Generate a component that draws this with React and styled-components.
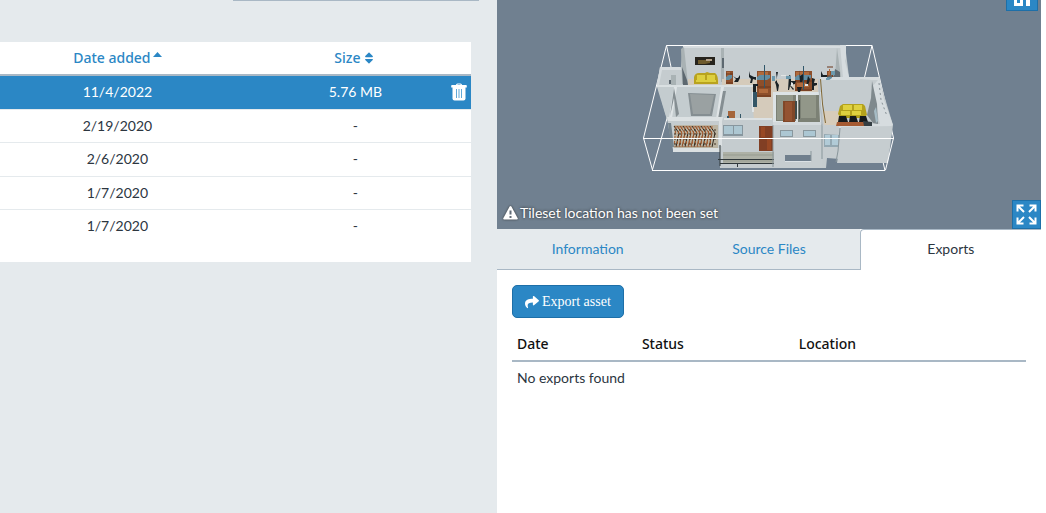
import React from "react";
import styled, { createGlobalStyle, css } from "styled-components";
import { FaShare, FaSort } from "react-icons/fa";

const blue = "#2b87c5";
const line = "#a9b8c5";
const pale = "#e5eaed";

const GlobalStyle = createGlobalStyle`
  *, *::before, *::after { box-sizing: border-box; }
  body {
    margin: 0;
    background: #fff;
    color: #2c363f;
    font: 14px/20px Lato, "Liberation Sans", sans-serif;
  }
`;

const Page = styled.div`
  display: grid;
  grid-template-columns: minmax(0, 497fr) minmax(0, 544fr);
  min-height: 100vh;
  padding-right: 5px;
`;

const AssetsPane = styled.main`
  padding-right: 26px;
  background: ${pale};
`;

const Toolbar = styled.div`
  width: 246px;
  height: 1px;
  margin: 0 -8px 41px auto;
  background: ${line};
`;

const AssetCard = styled.section`
  padding-bottom: 18px;
  background: #fff;
`;

const AssetTable = styled.table`
  width: 100%;
  border-collapse: separate;
  border-spacing: 0;
  table-layout: fixed;
  text-align: center;

  th, td { padding: 0; }
  th { height: 34px; border-bottom: 2px solid ${line}; }
  th:first-child, td:first-child { padding-right: 29px; }
`;

const DateColumn = styled.col`
  width: 56%;
`;

const ActionColumn = styled.col`
  width: 24px;
`;

const SortButton = styled.button`
  display: inline-flex;
  align-items: center;
  gap: 2px;
  padding: 0;
  border: 0;
  background: none;
  color: ${blue};
  font: 500 14px/20px "Noto Sans", "Open Sans", sans-serif;
`;

const AssetRow = styled.tr`
  td {
    height: 33px;
    border-bottom: 1px solid ${pale};
  }
  &:nth-child(odd) td { height: 34px; padding-bottom: 2px; }
  &:last-child td { border-bottom: 0; }
  ${({ $selected }) => $selected && css`
    td { background: ${blue}; color: #fff; }
  `}
`;

const TrashButton = styled.button`
  display: block;
  width: 24px;
  padding: 0 4px;
  border: 0;
  background: none;
  color: #fff;
  svg { display: block; }
`;

const DetailPane = styled.aside`
  background: #fff;
`;

const Viewer = styled.section`
  position: relative;
  height: 229px;
  padding-top: 40px;
  overflow: hidden;
  background: #708090;
`;

const Model = styled.svg`
  display: block;
  width: 260px;
  height: 136px;
  margin: 0 auto;
`;

const ViewerButton = styled.button`
  position: absolute;
  display: flex;
  align-items: center;
  justify-content: center;
  padding: 0;
  border: 1px solid #1d6fa8;
  background: ${blue};
  color: #fff;
`;

const SceneButton = styled(ViewerButton)`
  top: -21px;
  right: 3px;
  width: 32px;
  height: 32px;
`;

const FullscreenButton = styled(ViewerButton)`
  right: 0;
  bottom: 0;
  width: 29px;
  height: 29px;
`;

const Notice = styled.p`
  position: absolute;
  left: 6px;
  bottom: 6px;
  display: flex;
  align-items: center;
  gap: 2px;
  margin: 0;
  color: #fff;
  text-shadow: 0 0 3px #222;
  svg { filter: drop-shadow(0 0 1px #333); }
`;

const Tabs = styled.div`
  display: grid;
  grid-template-columns: repeat(3, 1fr);
  height: 41px;
`;

const Tab = styled.button`
  padding: 0;
  border: 0;
  border-bottom: 1px solid ${line};
  background: ${pale};
  color: ${blue};
  font: inherit;
  ${({ $active }) => $active && css`
    padding-bottom: 2px;
    border: solid ${line};
    border-width: 1px 0 0 1px;
    border-radius: 4px 0 0 0;
    background: #fff;
    color: #2c363f;
  `}
`;

const TabPanel = styled.div`
  padding: 15px;
`;

const ExportButton = styled.button`
  display: flex;
  align-items: center;
  gap: 3px;
  height: 33px;
  padding: 0 12px;
  border: 1px solid #1d6fa8;
  border-radius: 5px;
  background: ${blue};
  color: #fff;
  font: 14px/20px "Liberation Serif", serif;
`;

const ExportTable = styled.table`
  width: 100%;
  margin-top: 8px;
  border-collapse: separate;
  border-spacing: 0;
  table-layout: fixed;
  text-align: left;

  th {
    height: 36px;
    padding: 2px 5px 0;
    border-bottom: 2px solid ${line};
    color: #111;
    font: 500 14px/20px "Noto Sans", "Open Sans", sans-serif;
  }
  td { height: 32px; padding: 0 5px; }
`;

const ExportColumn = styled.col`
  width: ${({ $share }) => $share};
`;

const assets = [
  { date: "11/4/2022", size: "5.76 MB", selected: true },
  { date: "2/19/2020", size: "-" },
  { date: "2/6/2020", size: "-" },
  { date: "1/7/2020", size: "-" },
  { date: "1/7/2020", size: "-" },
];

function CaretUp() {
  return (
    <svg width="9" height="12" viewBox="0 0 9 12" aria-hidden="true">
      <path d="M0 5 4.5 0 9 5z" fill="currentColor" />
    </svg>
  );
}

function Trash() {
  return (
    <svg width="16" height="18" viewBox="0 0 16 18" aria-hidden="true">
      <path d="M5 2Q5 .5 6.500 .5h3Q11 .5 11 2h4q.8 0 .8.700V4.500H.2V2.700Q.2 2 1 2zM6.500 1.500V2h3v-.5z" fill="currentColor" fillRule="evenodd" />
      <path d="M1.500 4h13v11.500q0 2-2 2h-9q-2 0-2-2z" fill="currentColor" />
      <path d="M5.500 6v9M8 6v9M10.500 6v9" stroke="#62a9d8" />
    </svg>
  );
}

function Warning() {
  return (
    <svg width="15" height="14" viewBox="0 0 15 14" aria-hidden="true">
      <path d="M6.600.6q.9-1.200 1.800 0l6.300 11.600q.5 1.300-1 1.300H1.300q-1.500 0-1-1.300z" fill="currentColor" />
      <path d="M6.500 4.500h2v4h-2zM6.500 10h2v2h-2z" fill="#626d78" />
    </svg>
  );
}

function Fullscreen() {
  return (
    <svg width="21" height="21" viewBox="0 0 21 21" fill="none" stroke="currentColor" strokeWidth="2" aria-hidden="true">
      <path d="M1.500 7.500v-6h6M2 2l6 6M13.500 1.500h6v6M19 2l-6 6M1.500 13.500v6h6M2 19l6-6M19.500 13.500v6h-6M19 19l-6-6" />
    </svg>
  );
}

function Scene() {
  return (
    <svg width="22" height="22" viewBox="0 0 22 22" aria-hidden="true">
      <path d="M3 13h9v9H3zm3 3v3h3v-3z" fill="currentColor" fillRule="evenodd" />
      <path d="M15 13h4v9h-4zM3 9 11 2l8 7v2H3z" fill="currentColor" />
    </svg>
  );
}

function Desk({ x, y, width, height }) {
  return (
    <g transform={`translate(${x} ${y})`}>
      <path fill="#8d4f2b" d={`M0 0h${width}v${height}H0z`} />
      <path fill="#b06a3c" d={`M1 1h${width - 4}v4H1zM2 ${height - 8}h${width - 5}v4H2z`} />
      <path fill="#628da1" d={`M0 6l3-2h${width - 4}v3l-3 2H0z`} />
      <path stroke="#6b361c" d={`M0 ${height - 10}h${width}M0 ${height - 1}h${width}`} />
    </g>
  );
}

const desks = [
  { x: 726, y: 71, width: 7, height: 13 },
  { x: 757, y: 71, width: 14, height: 26 },
  { x: 795, y: 71, width: 17, height: 20 },
  { x: 827, y: 71, width: 6, height: 6 },
];

function Building() {
  return (
    <Model viewBox="639 40 260 136" role="img" aria-label="Building model preview">
      <path d="M643.500 138 666.500 45.500H872L893.500 138M666.500 45.500l9 43-23 81M872 45.500l-8 34 21 91" fill="none" stroke="#fff" />
      <path fill="#c5cccf" d="M660 67h21l2-21 162-1 4 32h30l5 18 9 30-5 38h-47l-1-4-13-1-1 10H720v-18h-47l-6-31-10-35z" />
      <path fill="#d6dcdf" d="M660 67h20l2 3h-20l-3 15h-2zM683 46h158v2H683zM840 45h6v13l-1 3 4 16h-6zM820 77h59l1 3h-60z" />
      <path fill="#a9b2b4" d="M665 75h11v10h-11zM681 49l3-2 4 37h-6zM721 48h3v34h-3zM837 48l4 29h-6z" />
      <path fill="#c5cccf" d="M663 75h8v10h-8z" />
      <path fill="#5d6870" d="m682 67 5 13 1 5h-5zM722 58h2v10h-2zM669 80h2v4h-2zM835 69l5 3v5h-7z" />
      <path fill="#d5cbbb" d="M688 79h31v6h-31zM722 79h96v14h-44v26h-22V97l-1-12h-29z" />
      <path fill="#c6cdd0" d="M724 48h112l-2 27-16 3h-94z" />
      <path fill="#dae0e2" d="M657 85h96v2h-96z" />

      <path fill="#26231c" d="M695 57h20v8h-20z" />
      <path fill="#6e5a2c" d="M698 60h8l4-1v4l-5 1h-7z" />
      <path fill="#b4a28b" d="M706 59h6v2h-6z" />
      <path fill="#b9a31e" d="M694 77q1-4 5-4h6l2-1 3 1h5q3 2 3 8v3h-24z" />
      <path fill="#ddcf3f" d="M697 75h8v5h-8zM707 75h8v5h-8zM696 80h20v2h-20z" />

      {desks.map((desk) => <Desk key={desk.x} {...desk} />)}
      <g fill="#192125">
        <path d="m733 76 3 2h2l2-3v3l-2 4h-4l2-3zM749 71l1 4 4 2h2v3l-3-1-1 4h-2l1-4-2-2zM753 84h5v2h-2v6h-3zM776 72h2l-1 5v5l2 3-1 6h-1l-1-6-1-3 2-2zM789 75l2 1v5h5l-1 3-5 1 4 4-1 1-3-4-1 4h-1zM812 78l3 1-1 4h3v2l-3 1v4h-2zM821 71l2 4h4v2h-6z" />
        <path d="m799 70 1 6 3-2 1 3-2 5h-2zM808 76l2 3-2 7h-2zM797 87h5l-2 5h-2z" />
      </g>
      <path fill="#e2e5e4" d="m791 82 2 1v3h-2zM781 75h5v1h-5zM805 84h3v2h-3z" />
      <path d="M764.500 65v23M803.500 66v24" stroke="#31576a" />
      <path fill="#6c99ad" d="M772 76h3v5h-3zM786 76h5v3h-5zM826 78h3v2h-3zM831 71h4v4h-4zM728 109l5-2 2 5-4 7h-3z" />

      <path fill="#c4cccf" d="M657 87h94l3 33h-87z" />
      <path fill="#dfe4e6" d="M674 87h3l-5 31h-3zM721 87h3l-5 32h-3zM752 92h2v20h-2z" />
      <path fill="#858e92" d="m688 93 28 1-4 22h-21zM674 88l5 26-3 3-2-19-4 18zM726 91l-5 28h-3l5-28z" />
      <path fill="#9aa1a2" d="m690 94 24 1-4 19h-17z" />
      <path fill="#a5653b" d="M728 111h7v7h-7z" />
      <path fill="#345666" d="M753 92h4v15h-4zM727 116h2v4h-2zM740 114h1v4h-1z" />
      <path fill="#dce1e3" d="M667 117h56l-1 4h-54zM724 118h48v2h-48z" />

      <path fill="#bbb4a2" d="M674 125h44v23h-44z" />
      {Array.from({ length: 13 }, (_, i) => (
        <g key={i}>
          <path d={`M${674 + i * 3} 126l5 7-3 14`} fill="none" stroke={i % 3 ? "#874b28" : "#2f281f"} />
          <path d={`M${676 + i * 3} 126l-2 21`} stroke="#a85d30" strokeDasharray="3 2" />
        </g>
      ))}
      <path d="M674 130h45M674 134h45M674 139h45M674 144h45" stroke="#3e3022" strokeDasharray="2 3" />
      <path fill="#75848d" d="M668 123h3l3 24h-3z" />
      <path fill="#dbe0e2" d="M673 148h47v4h-47zM719 121h3v25h-3z" />

      <path fill="#c5cccf" d="M723 120h48v33h-48z" />
      <path fill="#87969e" d="M723 125h20v11h-20z" />
      <path fill="#adc7d2" d="M724 126h9v8h-9zM734 126h8v8h-8z" />
      <path fill="#813f24" d="M759 126h14v25h-14z" />
      <path fill="#984824" d="M761 127h4v10h-4zM767 139h4v11h-4z" />
      <path fill="#aeb1a6" d="M723 152h51v12h-51z" />
      <path stroke="#969b8f" d="M723 155h50M723 161h50" />
      <path d="M720 145v21M718 159.500h56M720 163.500h54M737.500 163v4" stroke="#30383b" fill="none" />

      <path fill="#dde3e5" d="M773 92h49v31h-49z" />
      <path fill="#7c8175" d="M776 95h20v26h-20zM798 95h21l1 27h-22z" />
      <path fill="#929789" d="M777 95h16v25h-16zM801 95h15v23h-15z" />
      <path fill="#804728" d="M783 101h12v21h-12z" />
      <path fill="#945331" d="M785 102h7v19h-7z" />
      <path fill="#3f4a48" d="M795 101h2v18h-2zM799 100h1v19h-1z" />
      <path fill="#d3d9dc" d="M773 122h50v4h-50z" />
      <path fill="#c6cdd0" d="M774 125h48v43h-48z" />
      <path fill="#89979d" d="M780 130h13v7h-13zM803 130h13v7h-13z" />
      <path fill="#acc7d3" d="M781 131h11v5h-11zM804 131h11v5h-11z" />
      <path fill="#707f8d" d="M785 155h26v6h-26z" />
      <path fill="#dbe1e5" d="M785 161h26v1h-26z" />
      <path d="M811 151v10M773 125v42M822 123v36" stroke="#89969b" />

      <path fill="#d7ccba" d="M823 111h19v14h-18z" />
      <path fill="#b6bec2" d="m819 79 4 45h-2l-3-42z" />
      <path d="m820.500 79 2 25 3 19" stroke="#806735" fill="none" />
      <path fill="#d6dcdf" d="m879 77 5 23 9 25-5 3h-49l-1-4h42l-9-36 7-8z" />
      <path fill="#c5cccf" d="m860 79 12 1-2 25-5-1z" />
      <path fill="#7f898d" d="m872 81 5 23 1 20-5-1-6-8 4-17z" />
      <path fill="#a6bcc5" d="m876 107 2 14-2 2-2-12z" />
      <path fill="#b4a21c" d="m840 106 3-2h20l2 2 2 9-4 3h-22l-3-4z" />
      <path fill="#dfd13f" d="M843 105h9v5h-9zM854 105h8v5h-8zM841 111h9v4h-9zM852 111h9v4h-9z" />
      <path fill="#15191b" d="M839 116h7l2 6h-10zM850 116h6l2 6h-9zM860 116h6l2 6h-9z" />
      <path fill="#a55a32" d="M837 122h29v4h-30z" />
      <path fill="#343e43" d="m863 121 9 1v4h-8z" />
      <path fill="#c6cdd0" d="m841 127 51-1-5 37h-50l3-20z" />
      <path fill="#93a8b2" d="m824 134 15 1-1 12h-14z" />
      <path fill="#b1cbd7" d="M825 135h5v10h-5zM832 135h6v10h-6z" />
      <path d="m840 128-2 23-2 11" stroke="#89969b" fill="none" />
      <path d="m879 83 2 17 6 16" stroke="#879196" strokeDasharray="2 3" fill="none" />
      <path d="M643 138.500h251M652 170.500h233M643.500 138l9 32M893.500 138l-8 32" stroke="#fff" />
    </Model>
  );
}

export default function App() {
  return (
    <>
      <GlobalStyle />
      <Page>
        <AssetsPane>
          <Toolbar />
          <AssetCard>
            <AssetTable>
              <colgroup>
                <DateColumn />
                <col />
                <ActionColumn />
              </colgroup>
              <thead>
                <tr>
                  <th aria-sort="ascending"><SortButton>Date added <CaretUp /></SortButton></th>
                  <th><SortButton>Size <FaSort /></SortButton></th>
                  <th />
                </tr>
              </thead>
              <tbody>
                {assets.map(({ date, size, selected }, i) => (
                  <AssetRow key={i} $selected={selected}>
                    <td>{date}</td>
                    <td>{size}</td>
                    <td>{selected && <TrashButton aria-label="Delete asset"><Trash /></TrashButton>}</td>
                  </AssetRow>
                ))}
              </tbody>
            </AssetTable>
          </AssetCard>
        </AssetsPane>
        <DetailPane>
          <Viewer>
            <Building />
            <SceneButton aria-label="Scene view"><Scene /></SceneButton>
            <Notice><Warning /> Tileset location has not been set</Notice>
            <FullscreenButton aria-label="Full screen"><Fullscreen /></FullscreenButton>
          </Viewer>
          <Tabs role="tablist">
            <Tab role="tab" aria-selected="false">Information</Tab>
            <Tab role="tab" aria-selected="false">Source Files</Tab>
            <Tab role="tab" aria-selected="true" $active>Exports</Tab>
          </Tabs>
          <TabPanel role="tabpanel">
            <ExportButton><FaShare /> Export asset</ExportButton>
            <ExportTable>
              <colgroup>
                <ExportColumn $share="24.3%" />
                <ExportColumn $share="30.5%" />
                <col />
              </colgroup>
              <thead>
                <tr><th>Date</th><th>Status</th><th>Location</th></tr>
              </thead>
              <tbody>
                <tr><td colSpan={3}>No exports found</td></tr>
              </tbody>
            </ExportTable>
          </TabPanel>
        </DetailPane>
      </Page>
    </>
  );
}
